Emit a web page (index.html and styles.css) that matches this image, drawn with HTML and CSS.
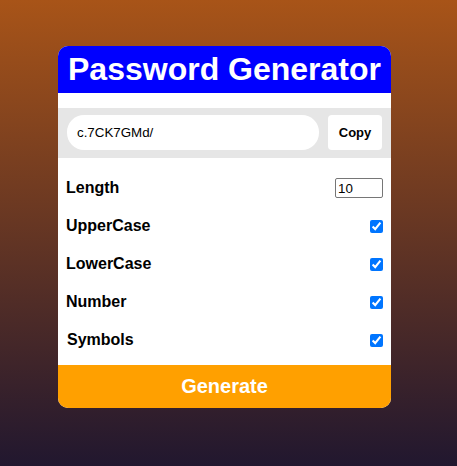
FILE: index.html
```html
<!DOCTYPE html>
<html>
<head>
<meta charset="utf-8">
<link rel="stylesheet" href="styles.css">
</head>
<body>
<div class="page">
  <div class="card">
    <h1 class="title">Password Generator</h1>
    <div class="result">
      <input class="pw" type="text" value="c.7CK7GMd/" readonly>
      <button class="copy">Copy</button>
    </div>
    <div class="options">
      <div class="row"><label>Length</label><input class="num" type="number" value="10"></div>
      <div class="row"><label>UpperCase</label><input class="chk" type="checkbox" checked></div>
      <div class="row"><label>LowerCase</label><input class="chk" type="checkbox" checked></div>
      <div class="row"><label>Number</label><input class="chk" type="checkbox" checked></div>
      <div class="row"><label class="sym">Symbols</label><input class="chk" type="checkbox" checked></div>
    </div>
    <button class="generate">Generate</button>
  </div>
</div>
</body>
</html>
```
FILE: styles.css
```css
html, body {
  margin: 0;
  padding: 0;
  height: 100%;
}
body {
  background: linear-gradient(to bottom, #a85418 0%, #21172f 100%);
  font-family: "Liberation Sans", Arial, sans-serif;
}
.page {
  padding: 46px 0 0 58px;
}
.card {
  width: 333px;
  background: #fff;
  border-radius: 10px;
  overflow: hidden;
  display: flex;
  flex-direction: column;
}
.title {
  margin: 0;
  background: #0000ff;
  color: #fff;
  font-size: 32px;
  font-weight: bold;
  line-height: 47px;
  height: 47px;
  text-align: center;
  white-space: nowrap;
}
.result {
  margin-top: 15px;
  background: #e6e6e6;
  height: 50px;
  box-sizing: border-box;
  padding: 7px 9px 8px 9px;
  display: flex;
  gap: 9px;
}
.pw {
  flex: 1;
  min-width: 0;
  height: 35px;
  box-sizing: border-box;
  border: none;
  border-radius: 17px;
  background: #fff;
  padding: 0 10px;
  font-family: "Liberation Sans", Arial, sans-serif;
  font-size: 13.33px;
  color: #000;
  outline: none;
}
.copy {
  width: 54px;
  height: 35px;
  border: none;
  border-radius: 4px;
  background: #fff;
  font-family: "Liberation Sans", Arial, sans-serif;
  font-size: 13px;
  font-weight: bold;
  color: #000;
  padding: 0;
}
.options {
  padding: 11px 8px 6px 8px;
  display: flex;
  flex-direction: column;
}
.row {
  height: 38px;
  display: flex;
  align-items: center;
  justify-content: space-between;
}
.row label {
  font-size: 16px;
  font-weight: bold;
  color: #000;
}
.row label.sym {
  padding-left: 1px;
}
.num {
  width: 48px;
  height: 20px;
  box-sizing: border-box;
  margin: 0;
  border: 1px solid #767676;
  border-radius: 2px;
  padding: 1px 2px;
  font-family: "Liberation Sans", Arial, sans-serif;
  font-size: 13.33px;
}
.chk {
  width: 13px;
  height: 13px;
  margin: 0;
}
.generate {
  height: 43px;
  border: none;
  background: #ffa000;
  color: #fff;
  font-family: "Liberation Sans", Arial, sans-serif;
  font-size: 20px;
  font-weight: bold;
  padding: 0;
}
```
